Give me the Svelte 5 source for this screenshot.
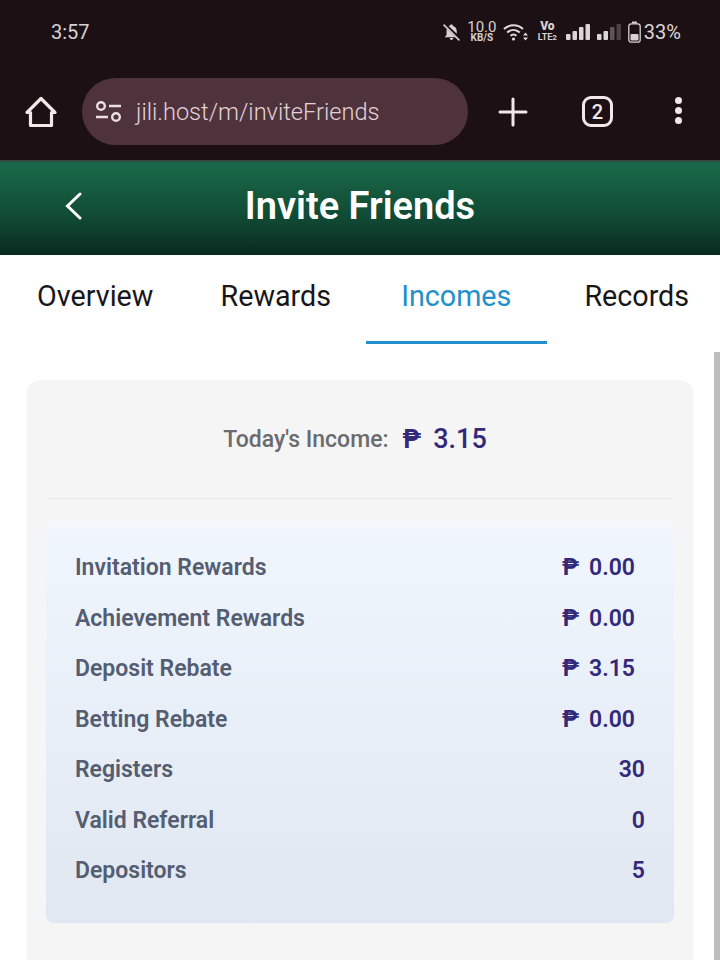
<script lang="ts">
  const rows = [
    { label: 'Invitation Rewards', value: '0.00', money: true },
    { label: 'Achievement Rewards', value: '0.00', money: true },
    { label: 'Deposit Rebate', value: '3.15', money: true },
    { label: 'Betting Rebate', value: '0.00', money: true },
    { label: 'Registers', value: '30', money: false },
    { label: 'Valid Referral', value: '0', money: false },
    { label: 'Depositors', value: '5', money: false }
  ];
  const tabs = ['Overview', 'Rewards', 'Incomes', 'Records'];
  const active = 'Incomes';
</script>

<div class="page">
  <div class="chrome">
    <div class="status">
      <span class="time">3:57</span>
      <div class="status-icons">
        <svg class="bell" width="19" height="19" viewBox="0 0 18 18" fill="#d8d2d4">
          <path d="M9 1.500c.8 0 1.300.5 1.400 1.300 2.300.6 3.600 2.500 3.600 4.900v2.400l-7.800-7.300c.5-.2.8-.3 1.400-.4.1-.4.6-.9 1.400-.9zM4.600 5.500 12.500 13.500H2.500l1.800-2.200V7.500c0-.7.100-1.400.3-2zM7.300 14.300h3.400c0 1-.7 1.700-1.700 1.700s-1.700-.7-1.700-1.700z" />
          <path d="M1.500 1.500l15 15" stroke="#d8d2d4" stroke-width="1.500" />
        </svg>
        <span class="speed"><b>10.0</b><i>KB/S</i></span>
        <svg class="wifi" width="26" height="20" viewBox="0 0 26 20" fill="none" stroke="#e2dcde" stroke-width="2">
          <path d="M1 7c5.500-5 13.500-5 19 0M4.200 10.500c3.800-3.400 8.800-3.400 12.600 0M7.500 13.800c2-1.700 4-1.700 6 0" />
          <circle cx="10.500" cy="17" r="1.600" fill="#e2dcde" stroke="none" />
          <path d="M20 13.500h5l-2.500-3zM20 15.500h5l-2.500 3z" fill="#e2dcde" stroke="none" />
        </svg>
        <span class="volte"><b>Vo</b><i>LTE<em>2</em></i></span>
        <svg class="bars" width="25" height="18" viewBox="0 0 25 18" fill="#dcd6d8">
          <rect x="0" y="11" width="4.500" height="6" rx="1" />
          <rect x="6.500" y="8" width="4.500" height="9" rx="1" />
          <rect x="13" y="4" width="4.500" height="13" rx="1" />
          <rect x="19.500" y="1" width="4.500" height="16" rx="1" />
        </svg>
        <svg class="bars" width="25" height="18" viewBox="0 0 25 18" fill="#dcd6d8">
          <rect x="0" y="11" width="4.500" height="6" rx="1" />
          <rect x="6.500" y="8" width="4.500" height="9" rx="1" />
          <rect x="13" y="4" width="4.500" height="13" rx="1" opacity=".35" />
          <rect x="19.500" y="1" width="4.500" height="16" rx="1" opacity=".25" />
        </svg>
        <svg class="bars" width="13" height="22" viewBox="0 0 13 22" fill="none">
          <rect x="4" y="0.500" width="5" height="2" rx=".5" fill="#d8d2d4" />
          <rect x=".8" y="2.800" width="11.400" height="18.400" rx="2.500" stroke="#d8d2d4" stroke-width="1.300" />
          <rect x="2.500" y="13" width="8" height="6.500" rx="1" fill="#d8d2d4" />
        </svg>
        <span class="pct">33%</span>
      </div>
    </div>
    <div class="toolbar">
      <svg class="home" width="34" height="34" viewBox="0 0 34 34" fill="none" stroke="#f5e6ea" stroke-width="3.200" stroke-linejoin="round" stroke-linecap="round">
        <path d="M3 17.500 17 3.500l14 14h-3.500v13h-21v-13z" />
      </svg>
      <div class="url">
        <svg width="28" height="24" viewBox="0 0 28 24" fill="none" stroke="#ecdfe3" stroke-width="2.400">
          <circle cx="6" cy="6" r="3.800" />
          <path d="M14 6h12M1 17h12" />
          <circle cx="21" cy="17" r="3.800" />
        </svg>
        <span>jili.host/m/inviteFriends</span>
      </div>
      <svg class="plus" width="30" height="30" viewBox="0 0 30 30" stroke="#f5e6ea" stroke-width="3" stroke-linecap="round">
        <path d="M15 2v26M2 15h26" />
      </svg>
      <div class="tab-count">2</div>
      <div class="dots"><i></i><i></i><i></i></div>
    </div>
  </div>

  <header class="hero">
    <svg class="back" width="18" height="28" viewBox="0 0 18 28" fill="none" stroke="#fff" stroke-width="3" stroke-linecap="round">
      <path d="M15 2 2.500 14 15 26" />
    </svg>
    <h1>Invite Friends</h1>
  </header>

  <nav class="tabs">
    {#each tabs as tab}
      <div class="tab" class:active={tab === active}>{tab}</div>
    {/each}
  </nav>

  <main class="content">
    <section class="card">
      <div class="today">
        <span class="today-label">Today's Income:</span>
        <span class="peso">₱</span>
        <span class="today-value">3.15</span>
      </div>
      <div class="stats">
        {#each rows as row}
          <div class="row">
            <span class="label">{row.label}</span>
            {#if row.money}
              <span class="value money"><span class="sign">₱</span>{row.value}</span>
            {:else}
              <span class="value">{row.value}</span>
            {/if}
          </div>
        {/each}
      </div>
    </section>
  </main>

  <div class="scrollbar"></div>
</div>

<style>
  :global(body) { margin: 0; background: #fff; }

  .page {
    position: relative;
    height: 960px;
    overflow: hidden;
    font-family: Roboto, "Liberation Sans", sans-serif;
  }

  .chrome { height: 160px; background: #1c1014; }

  .status {
    height: 64px;
    padding: 0 39px 0 51px;
    display: flex;
    justify-content: space-between;
    align-items: center;
    color: #d8d2d4;
  }
  .time { font-size: 20px; }
  .status-icons { display: flex; align-items: center; }
  .bell { margin-right: 6px; }
  .speed, .volte { display: flex; flex-direction: column; align-items: center; line-height: 1; }
  .speed { margin-right: 6px; width: 30px; }
  .speed b { font-size: 15px; font-weight: 400; height: 12px; line-height: 12px; }
  .speed i { font-size: 10px; line-height: 10px; font-style: normal; font-weight: 700; }
  .wifi { margin-right: 8px; }
  .volte { margin-right: 8px; width: 21px; font-weight: 700; }
  .volte b { font-size: 12px; line-height: 11px; }
  .volte i { font-size: 9px; line-height: 10px; font-style: normal; }
  .volte em { font-style: normal; font-size: 8px; }
  .bars { margin-left: 6px; }
  .status-icons .volte + .bars { margin-left: 0; }
  .pct { font-size: 20px; margin-left: 3px; color: #dcd6d8; }

  .toolbar {
    height: 96px;
    display: flex;
    align-items: flex-start;
    padding-top: 14px;
    box-sizing: border-box;
  }
  .home { margin: 17px 0 0 24px; }
  .url {
    margin-left: 24px;
    width: 386px;
    height: 67px;
    border-radius: 34px;
    background: #4f333c;
    color: #e3d2d8;
    display: flex;
    align-items: center;
    padding-left: 13px;
    gap: 13px;
    box-sizing: border-box;
    font-size: 23.600px;
    font-weight: 300;
  }
  .plus { margin: 19px 0 0 30px; }
  .tab-count {
    margin: 18px 0 0 54px;
    width: 25px;
    height: 25px;
    border: 3px solid #f5e6ea;
    border-radius: 9px;
    color: #f5e6ea;
    font-size: 20px;
    font-weight: 500;
    display: flex;
    align-items: center;
    justify-content: center;
  }
  .dots {
    margin: 19px 0 0 62px;
    display: flex;
    flex-direction: column;
    gap: 3px;
  }
  .dots i { width: 7px; height: 7px; border-radius: 50%; background: #f5e6ea; display: block; }

  .hero {
    height: 95px;
    box-sizing: border-box;
    border-top: 2px solid #35493f;
    padding-bottom: 6px;
    background: linear-gradient(180deg, #1a6a4a 0%, #104a34 60%, #0a2a20 100%);
    display: flex;
    align-items: center;
    justify-content: center;
    position: relative;
  }
  .back { position: absolute; left: 65px; top: 30px; }
  h1 { margin: 0; color: #fff; font-size: 38px; font-weight: 600; }

  .tabs { display: flex; height: 89px; background: #fff; padding-left: 5px; }
  .tab {
    flex: 0 0 180.500px;
    text-align: center;
    font-size: 28.700px;
    line-height: 82px;
    color: #17171a;
    box-sizing: border-box;
    height: 89px;
  }
  .tab.active { color: #2190cb; border-bottom: 3px solid #2190cb; }

  .content { padding: 36px 27px 0; }

  .card {
    background: #f5f5f6;
    border-radius: 14px;
    padding: 0 20px;
    height: 640px;
  }

  .today {
    height: 119px;
    box-sizing: border-box;
    border-bottom: 1px solid #e8e8e8;
    padding-right: 10px;
    display: flex;
    align-items: center;
    justify-content: center;
  }
  .today-label { font-size: 23px; font-weight: 500; color: #6b6b6d; margin-right: 14px; }
  .peso { font-size: 25px; font-weight: 700; color: #33287a; margin-right: 12px; }
  .today-value { font-size: 27px; font-weight: 500; color: #33287a; }

  .stats {
    margin: 21px 0 0 -1px;
    height: 403px;
    width: 628px;
    box-sizing: border-box;
    padding: 22.400px 29px 0 29px;
    border-radius: 8px;
    background: linear-gradient(180deg, #f3f6fb 0%, #eff5fd 8%, #e0e7f0 100%);
  }
  .row {
    height: 50.500px;
    display: flex;
    justify-content: space-between;
    align-items: center;
    font-weight: 600;
  }
  .label { font-size: 23px; color: #545d71; }
  .value { font-size: 23px; color: #33287a; }
  .money { width: 73px; margin-right: 10px; display: flex; justify-content: space-between; }
  .sign { font-weight: 700; }

  .scrollbar {
    position: absolute;
    right: 0;
    top: 352px;
    bottom: 0;
    width: 6px;
    background: #bdbdbd;
  }
</style>
